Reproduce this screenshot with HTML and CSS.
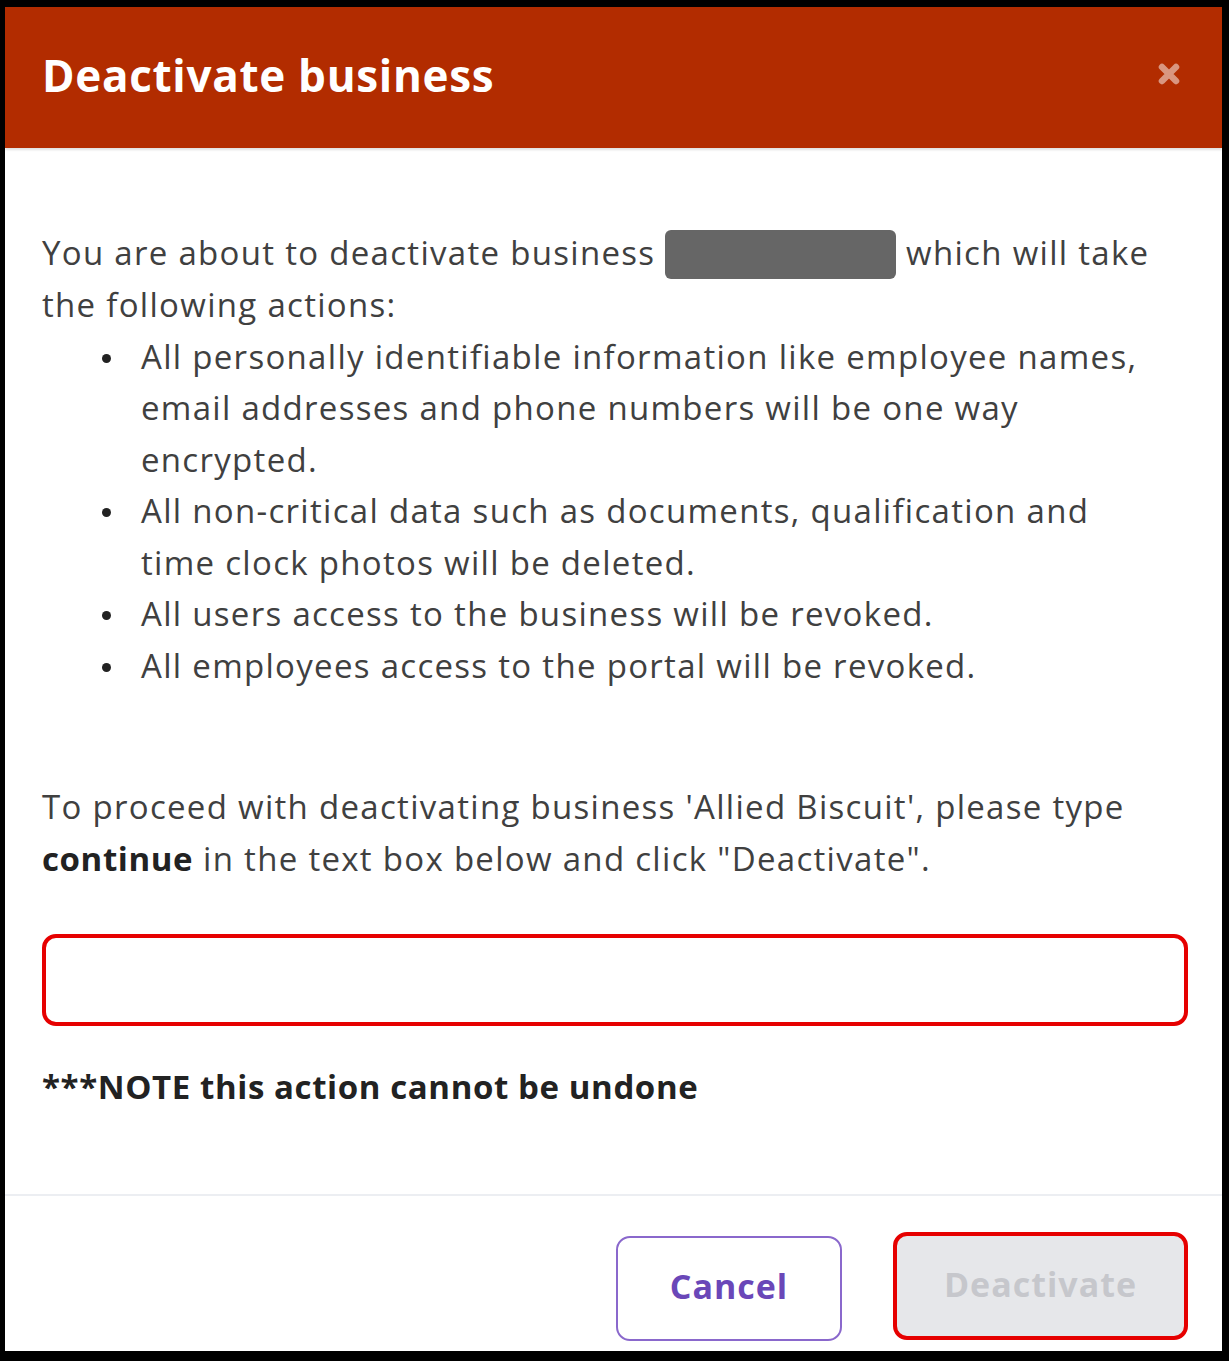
FILE: index.html
```html
<!DOCTYPE html>
<html lang="en">
<head>
    <meta charset="UTF-8">
    <meta name="viewport" content="width=device-width, initial-scale=1.0">
    <title>Deactivate business</title>
    <link rel="stylesheet" href="styles.css">
</head>
<body>
    <div class="modal">
        <header class="modal-header">
            <h1>Deactivate business</h1>
            <button class="close" aria-label="Close">
                <svg width="24" height="24" viewBox="0 0 24 24"><path d="M5 5 L19 19 M19 5 L5 19" stroke="currentColor" stroke-width="6.5" stroke-linecap="round"/></svg>
            </button>
        </header>
        <div class="modal-body">
            <p class="intro">You are about to deactivate business <span class="redacted"></span> which will take<br>the following actions:</p>
            <ul class="actions">
                <li>All personally identifiable information like employee names,<br>email addresses and phone numbers will be one way<br>encrypted.</li>
                <li>All non-critical data such as documents, qualification and<br>time clock photos will be deleted.</li>
                <li>All users access to the business will be revoked.</li>
                <li>All employees access to the portal will be revoked.</li>
            </ul>
            <p class="confirm">To proceed with deactivating business 'Allied Biscuit', please type<br><strong>continue</strong> in the text box below and click "Deactivate".</p>
            <input class="confirm-input" type="text" aria-label="Type continue">
            <p class="note">***NOTE this action cannot be undone</p>
        </div>
        <footer class="modal-footer">
            <button class="btn btn-cancel">Cancel</button>
            <button class="btn btn-deactivate" disabled>Deactivate</button>
        </footer>
    </div>
</body>
</html>
```

FILE: styles.css
```css
html, body { height: 100%; }
body { margin: 0; padding: 7px 7px 10px 5px; box-sizing: border-box; background: #000; font-family: 'Open Sans', 'Noto Sans', sans-serif; color: #404040; }
.modal { background: #fff; height: 100%; display: flex; flex-direction: column; }
.modal-header { background: #b22c00; height: 141px; padding: 0 41px 0 37px; display: flex; align-items: center; justify-content: space-between; box-shadow: 0 2px 2px rgba(0,0,0,0.12); flex-shrink: 0; }
.modal-header h1 { margin: -6px 0 0; color: #fff; font-size: 44px; font-weight: 700; letter-spacing: 0.7px; }
.close { background: none; border: 0; padding: 0; color: rgba(255,255,255,0.5); display: flex; margin-top: -8px; }
.modal-body { padding: 79px 34px 0 37px; flex: 1; }
.modal-body p { margin: 0; }
.intro, .actions, .confirm, .note { font-size: 33px; line-height: 51.5px; letter-spacing: 1.3px; }
.redacted { display: inline-block; width: 231px; height: 49px; background: #666; border-radius: 6px; vertical-align: -14px; }
.actions { margin: 0; padding-left: 99px; list-style: none; }
.actions li::before { content: ""; display: inline-block; width: 9px; height: 9px; border-radius: 50%; background: #222; margin: 0 30px 0 -39px; vertical-align: 6px; }
.confirm { margin-top: 90px !important; }
.confirm strong { color: #222; letter-spacing: 0.6px; }
.confirm-input { display: block; box-sizing: border-box; width: 1146px; height: 92px; margin-top: 50px; border: 4px solid #e60000; border-radius: 14px; outline: none; }
.note { margin-top: 35px !important; font-weight: 700; color: #222; letter-spacing: 0.6px !important; }
.modal-footer { border-top: 2px solid #eceef2; height: 157px; box-sizing: border-box; padding: 36px 34px 0 0; display: flex; align-items: flex-start; justify-content: flex-end; gap: 51px; flex-shrink: 0; }
.btn { font-family: inherit; font-size: 34px; font-weight: 700; letter-spacing: 1px; border-radius: 14px; cursor: pointer; padding-bottom: 6px; }
.btn-cancel { width: 226px; height: 105px; margin-top: 4px; background: #fff; border: 2px solid #8a68cc; color: #6a47b8; }
.btn-deactivate { width: 295px; height: 108px; background: #e6e7ea; border: 4px solid #e60000; color: #c6c7cc; cursor: default; }
```
